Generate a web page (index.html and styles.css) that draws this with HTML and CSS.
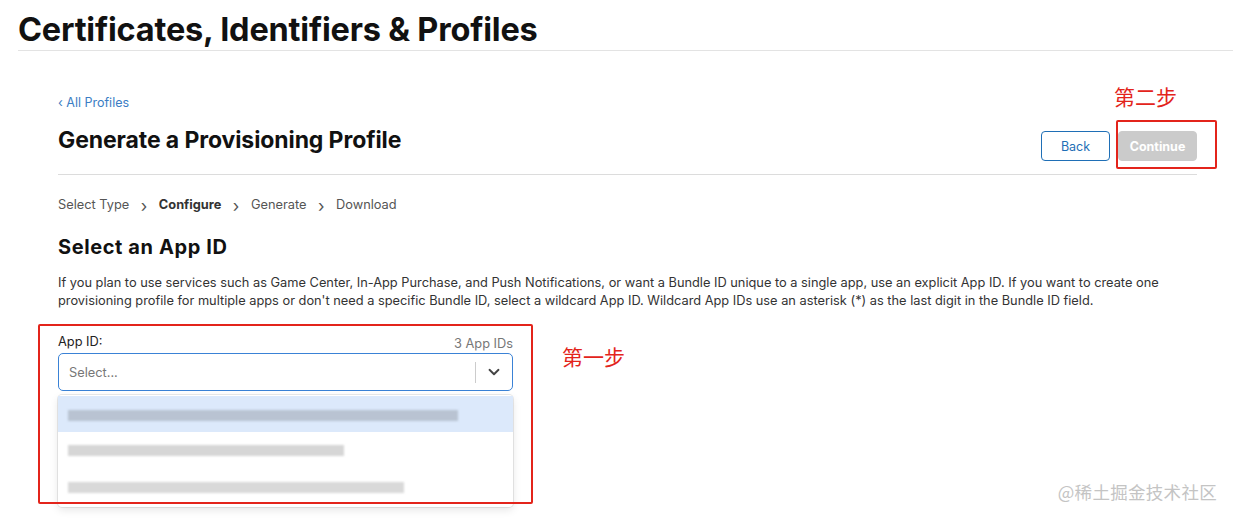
FILE: index.html
```html
<!DOCTYPE html>
<html lang="en">
<head>
<meta charset="utf-8">
<title>Certificates, Identifiers &amp; Profiles</title>
<link rel="stylesheet" href="styles.css">
</head>
<body>
<header class="top">
  <h1 class="top-title">Certificates, Identifiers &amp; Profiles</h1>
</header>
<main class="main">
  <a class="back-link" href="#">&lsaquo; All Profiles</a>
  <div class="head-row">
    <h2 class="page-title">Generate a Provisioning Profile</h2>
    <div class="actions">
      <button class="btn btn-back" type="button">Back</button>
      <button class="btn btn-continue" type="button">Continue</button>
      <span class="note note-two">第二步</span>
      <span class="mark mark-two"></span>
    </div>
  </div>
  <nav class="steps">
    <span class="step">Select Type</span>
    <span class="sep">&rsaquo;</span>
    <span class="step step-active">Configure</span>
    <span class="sep">&rsaquo;</span>
    <span class="step">Generate</span>
    <span class="sep">&rsaquo;</span>
    <span class="step">Download</span>
  </nav>
  <h3 class="section-title">Select an App ID</h3>
  <p class="desc">If you plan to use services such as Game Center, In-App Purchase, and Push Notifications, or want a Bundle ID unique to a single app, use an explicit App ID. If you want to create one provisioning profile for multiple apps or don't need a specific Bundle ID, select a wildcard App ID. Wildcard App IDs use an asterisk (*) as the last digit in the Bundle ID field.</p>
  <div class="field-area">
    <div class="field">
      <div class="field-head">
        <label class="field-label">App ID:</label>
        <span class="field-count">3 App IDs</span>
      </div>
      <div class="select">
        <span class="select-ph">Select...</span>
        <span class="select-div"></span>
        <svg class="select-chev" width="14" height="14" viewBox="0 0 14 14"><path d="M2.5 4.8 L7 9.2 L11.5 4.8" fill="none" stroke="#444" stroke-width="1.9" stroke-linecap="round" stroke-linejoin="round"/></svg>
      </div>
      <div class="menu">
        <div class="opt opt-hl"><span class="blur b1"></span></div>
        <div class="opt"><span class="blur b2"></span></div>
        <div class="opt"><span class="blur b3"></span></div>
      </div>
      <span class="mark mark-one"></span>
    </div>
    <span class="note note-one">第一步</span>
  </div>
</main>
<div class="watermark">@稀土掘金技术社区</div>
</body>
</html>
```
FILE: styles.css
```css
* { box-sizing: border-box; }
html, body { margin: 0; padding: 0; background: #fff; }
body {
  font-family: Inter, "Noto Sans", "Liberation Sans", "Noto Sans CJK SC", sans-serif;
  color: #1d1d1f;
  width: 1233px;
  height: 519px;
  overflow: hidden;
  position: relative;
}
.top {
  margin-left: 18px;
  border-bottom: 1px solid #e3e3e3;
  height: 51px;
}
.top-title {
  margin: 0;
  padding-top: 11px;
  font-size: 32.5px;
  line-height: 38px;
  font-weight: 700;
  letter-spacing: -0.2px;
  color: #111;
}
.main {
  margin-left: 58px;
  width: 1139px;
  padding-top: 44px;
}
.back-link {
  display: block;
  font-size: 12.5px;
  line-height: 16px;
  color: #3b7dc4;
  text-decoration: none;
}
.head-row {
  display: flex;
  align-items: flex-start;
  justify-content: space-between;
  height: 51px;
  margin-top: 13px;
  border-bottom: 1px solid #dcdcdc;
}
.page-title {
  margin: 2px 0 0;
  font-size: 23px;
  line-height: 28px;
  font-weight: 700;
  color: #111;
  letter-spacing: -0.1px;
}
.actions {
  display: flex;
  gap: 8px;
  position: relative;
  margin-top: 7px;
}
.btn {
  font-family: inherit;
  font-size: 12.5px;
  height: 30px;
  border-radius: 4px;
  padding: 0;
}
.btn-back {
  width: 69px;
  background: #fff;
  border: 1px solid #1f6fb6;
  color: #1f6fb6;
}
.btn-continue {
  width: 79px;
  background: #cbcbcb;
  border: 1px solid #cbcbcb;
  color: #fff;
  font-weight: 700;
}
.mark {
  position: absolute;
  border: 2.5px solid #e3241b;
  border-radius: 2px;
  pointer-events: none;
}
.mark-two {
  left: 75px;
  top: -11px;
  width: 101px;
  height: 49px;
}
.note {
  position: absolute;
  color: #e3241b;
  font-family: "Noto Sans CJK SC", sans-serif;
  font-size: 21px;
  line-height: 26px;
  white-space: nowrap;
}
.note-two {
  left: 73px;
  top: -48px;
}
.steps {
  display: flex;
  align-items: center;
  margin-top: 21px;
  font-size: 12.8px;
  line-height: 16px;
  color: #555;
}
.sep {
  font-size: 17px;
  color: #555;
  margin: 2px 11.5px 0 11.5px;
  line-height: 16px;
}
.step-active {
  font-weight: 700;
  color: #333;
}
.section-title {
  margin: 20px 0 0;
  font-size: 20px;
  line-height: 26px;
  font-weight: 700;
  letter-spacing: 0.6px;
  color: #111;
}
.desc {
  margin: 14px 0 0;
  width: 1130px;
  font-size: 12.8px;
  line-height: 18px;
  color: #333;
}
.field-area {
  display: flex;
  align-items: flex-start;
  margin-top: 21px;
}
.field {
  width: 455px;
  position: relative;
}
.field-head {
  display: flex;
  justify-content: space-between;
  align-items: flex-end;
  height: 18px;
  font-size: 12.8px;
}
.field-label { color: #222; }
.field-count { color: #777; position: relative; top: 2px; }
.select {
  margin-top: 4px;
  height: 38px;
  border: 1.5px solid #3a82d6;
  border-radius: 5px;
  display: flex;
  align-items: center;
  padding-left: 10px;
}
.select-ph {
  flex: 1;
  font-size: 12.8px;
  color: #777;
}
.select-div {
  width: 1px;
  height: 21px;
  background: #ccc;
}
.select-chev {
  margin: 0 11px 0 11px;
}
.menu {
  margin-top: 4px;
  height: 112px;
  border-radius: 4px;
  box-shadow: 0 0 0 1px rgba(0,0,0,0.08), 0 3px 8px rgba(0,0,0,0.1);
  padding-top: 1px;
  background: #fff;
}
.opt {
  height: 36px;
  display: flex;
  align-items: center;
  padding-left: 10px;
}
.opt-hl { background: #dce9fb; }
.blur {
  display: block;
  height: 11px;
  filter: blur(1.2px);
}
.b1 { width: 390px; background: #b9c3d2; margin-top: 2px; }
.b2 { width: 276px; background: #d6d6d6; margin-top: 0; }
.b3 { width: 336px; background: #d9d9d9; margin-top: 2px; }
.mark-one {
  left: -20px;
  top: -7px;
  width: 495px;
  height: 180px;
}
.note-one {
  position: static;
  margin-left: 49px;
  margin-top: 12px;
}
.watermark {
  position: absolute;
  right: 16px;
  bottom: 15px;
  font-family: "Noto Sans CJK SC", sans-serif;
  font-size: 17.5px;
  color: #c4c4c4;
  letter-spacing: 0.3px;
}
```
